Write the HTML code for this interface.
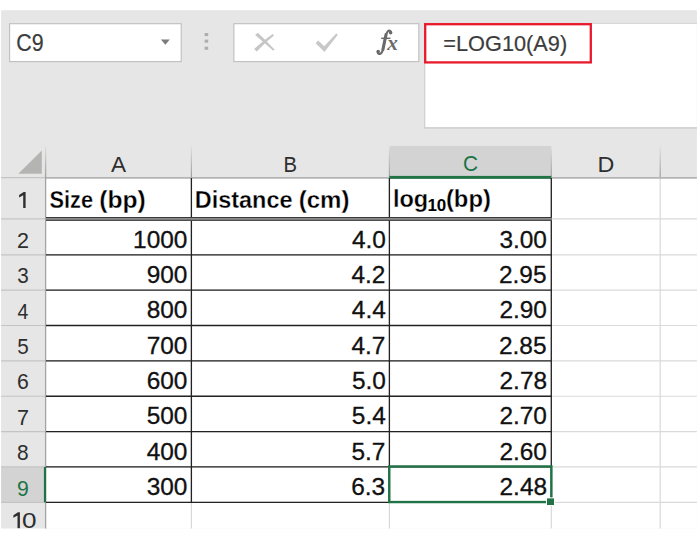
<!DOCTYPE html>
<html>
<head>
<meta charset="utf-8">
<title>Excel</title>
<style>
html,body{margin:0;padding:0;background:#fff;}
body{width:698px;height:539px;overflow:hidden;font-family:"Liberation Sans",sans-serif;}
svg{display:block;position:absolute;left:0;top:0;}
text{font-family:"Liberation Sans",sans-serif;}
.ui{fill:#3c3c3c;stroke:#3c3c3c;stroke-width:0.2px;}
.hd{fill:#2e2e2e;}
.hg{fill:#217346;}
.num{fill:#111;stroke:#111;stroke-width:0.3px;}
.b{font-weight:bold;fill:#000;stroke:#fff;stroke-width:0.3px;}
.fx{fill:#6a6a6a;}
.bs{font-weight:bold;fill:#000;}
</style>
</head>
<body>
<svg width="698" height="539" viewBox="0 0 698 539">
<rect x="1.1" y="10.2" width="695.8" height="518.5" fill="#e6e6e6"/>
<rect x="9.6" y="23.7" width="171.6" height="37.9" fill="#fff" stroke="#bebebe" stroke-width="1.1"/>
<text class="ui" x="16.22" y="51.10" textLength="27.30" lengthAdjust="spacingAndGlyphs" style="font-size:23.0px;">C9</text>
<path d="M160.9 39.6 L169.8 39.6 L165.35 44.8 Z" fill="#7c7c7c"/>
<rect x="204.6" y="33.0" width="3.6" height="3.1" fill="#aeaeae"/>
<rect x="204.6" y="39.6" width="3.6" height="3.1" fill="#aeaeae"/>
<rect x="204.6" y="46.7" width="3.6" height="3.1" fill="#aeaeae"/>
<rect x="233.9" y="23.7" width="184.9" height="37.9" fill="#fff" stroke="#bebebe" stroke-width="1.1"/>
<path d="M255.1 35.1 L257.9 32.7 Q266.3 40.7 274.5 49.6 L273.2 50.8 Q264.3 42.8 255.1 35.1 Z" fill="#c6c6c6"/>
<path d="M254.1 49.0 L256.7 51.5 Q264.8 42.8 273.9 35.5 L272.7 34.0 Q262.8 40.8 254.1 49.0 Z" fill="#c6c6c6"/>
<path d="M315.6 43.3 L318.2 40.4 L324.2 46.2 L336.2 33.4 L337.8 34.8 L324.5 51.9 Z" fill="#c8c8c8"/>
<path d="M390.9 32.9 C391.4 30.6 389.0 29.9 387.7 31.4 C386.0 33.4 385.7 36.3 385.1 39.3 L383.1 48.8 C382.4 52.0 381.2 54.1 379.4 54.0 C378.1 53.9 377.5 52.9 377.9 51.9" fill="none" stroke="#6a6a6a" stroke-width="2.1" stroke-linecap="round"/>
<path d="M386.0 34.6 L382.9 49.6" stroke="#6a6a6a" stroke-width="3.0" stroke-linecap="round" fill="none"/>
<circle cx="390.6" cy="32.8" r="1.8" fill="#6a6a6a"/>
<circle cx="378.2" cy="51.6" r="1.8" fill="#6a6a6a"/>
<path d="M381.2 38.3 L390.4 38.3" stroke="#6a6a6a" stroke-width="1.5" fill="none"/>
<text class="fx" x="387.16" y="49.90" textLength="10.56" lengthAdjust="spacingAndGlyphs" style="font-size:20.5px;font-family:'Liberation Serif',serif;font-style:italic;font-weight:bold;">x</text>
<rect x="424.1" y="22.8" width="272.8" height="105.9" fill="#cfcfcf"/>
<rect x="425.3" y="23.8" width="271.6" height="103.3" fill="#fff"/>
<rect x="425.2" y="24.2" width="165.6" height="38.2" fill="none" stroke="#e8192c" stroke-width="2.3"/>
<text class="ui" x="443.34" y="50.90" textLength="123.81" lengthAdjust="spacingAndGlyphs" style="font-size:22.8px;">=LOG10(A9)</text>
<rect x="46.0" y="178.0" width="650.9" height="350.7" fill="#fff"/>
<rect x="389.4" y="146.0" width="161.9" height="32.0" fill="#d3d3d3"/>
<rect x="1.1" y="466.96" width="44.9" height="35.36" fill="#d3d3d3"/>
<path d="M41.8 150.5 L41.8 173.8 L18.3 173.8 Z" fill="#b4b4b2"/>
<line x1="46.0" y1="218.90" x2="696.9" y2="218.90" stroke="#d9d9d9" stroke-width="1.2"/>
<line x1="46.0" y1="254.80" x2="696.9" y2="254.80" stroke="#d9d9d9" stroke-width="1.2"/>
<line x1="46.0" y1="290.16" x2="696.9" y2="290.16" stroke="#d9d9d9" stroke-width="1.2"/>
<line x1="46.0" y1="325.52" x2="696.9" y2="325.52" stroke="#d9d9d9" stroke-width="1.2"/>
<line x1="46.0" y1="360.88" x2="696.9" y2="360.88" stroke="#d9d9d9" stroke-width="1.2"/>
<line x1="46.0" y1="396.24" x2="696.9" y2="396.24" stroke="#d9d9d9" stroke-width="1.2"/>
<line x1="46.0" y1="431.60" x2="696.9" y2="431.60" stroke="#d9d9d9" stroke-width="1.2"/>
<line x1="46.0" y1="466.96" x2="696.9" y2="466.96" stroke="#d9d9d9" stroke-width="1.2"/>
<line x1="46.0" y1="502.32" x2="696.9" y2="502.32" stroke="#d9d9d9" stroke-width="1.2"/>
<line x1="191.4" y1="178.0" x2="191.4" y2="528.7" stroke="#d9d9d9" stroke-width="1.2"/>
<line x1="389.4" y1="178.0" x2="389.4" y2="528.7" stroke="#d9d9d9" stroke-width="1.2"/>
<line x1="551.3" y1="178.0" x2="551.3" y2="528.7" stroke="#d9d9d9" stroke-width="1.2"/>
<line x1="660.2" y1="178.0" x2="660.2" y2="528.7" stroke="#d9d9d9" stroke-width="1.2"/>
<line x1="1.1" y1="218.90" x2="46.0" y2="218.90" stroke="#c4c4c4" stroke-width="1.2"/>
<line x1="1.1" y1="254.80" x2="46.0" y2="254.80" stroke="#c4c4c4" stroke-width="1.2"/>
<line x1="1.1" y1="290.16" x2="46.0" y2="290.16" stroke="#c4c4c4" stroke-width="1.2"/>
<line x1="1.1" y1="325.52" x2="46.0" y2="325.52" stroke="#c4c4c4" stroke-width="1.2"/>
<line x1="1.1" y1="360.88" x2="46.0" y2="360.88" stroke="#c4c4c4" stroke-width="1.2"/>
<line x1="1.1" y1="396.24" x2="46.0" y2="396.24" stroke="#c4c4c4" stroke-width="1.2"/>
<line x1="1.1" y1="431.60" x2="46.0" y2="431.60" stroke="#c4c4c4" stroke-width="1.2"/>
<line x1="1.1" y1="466.96" x2="46.0" y2="466.96" stroke="#c4c4c4" stroke-width="1.2"/>
<line x1="1.1" y1="502.32" x2="46.0" y2="502.32" stroke="#c4c4c4" stroke-width="1.2"/>
<defs><linearGradient id="hg" gradientUnits="userSpaceOnUse" x1="0" y1="146.0" x2="0" y2="178.0"><stop offset="0" stop-color="#e0e0e0"/><stop offset="1" stop-color="#9c9c9c"/></linearGradient></defs>
<rect x="190.8" y="146.0" width="1.2" height="32.0" fill="url(#hg)"/>
<rect x="388.8" y="146.0" width="1.2" height="32.0" fill="url(#hg)"/>
<rect x="550.7" y="146.0" width="1.2" height="32.0" fill="url(#hg)"/>
<rect x="659.6" y="146.0" width="1.2" height="32.0" fill="url(#hg)"/>
<line x1="46.0" y1="177.9" x2="696.9" y2="177.9" stroke="#b4b4b4" stroke-width="1.9"/>
<line x1="1.1" y1="177.6" x2="46.0" y2="177.6" stroke="#c4c4c4" stroke-width="1.3"/>
<rect x="44.95" y="146.0" width="1.3" height="32.0" fill="url(#hg)"/>
<line x1="45.6" y1="177.0" x2="45.6" y2="528.7" stroke="#a4a4a4" stroke-width="1.3"/>
<rect x="389.4" y="175.9" width="161.9" height="2.9" fill="#217346"/>
<rect x="43.9" y="466.96" width="2.2" height="35.36" fill="#217346"/>
<line x1="46.0" y1="254.80" x2="551.3" y2="254.80" stroke="#222" stroke-width="1.3"/>
<line x1="46.0" y1="290.16" x2="551.3" y2="290.16" stroke="#222" stroke-width="1.3"/>
<line x1="46.0" y1="325.52" x2="551.3" y2="325.52" stroke="#222" stroke-width="1.3"/>
<line x1="46.0" y1="360.88" x2="551.3" y2="360.88" stroke="#222" stroke-width="1.3"/>
<line x1="46.0" y1="396.24" x2="551.3" y2="396.24" stroke="#222" stroke-width="1.3"/>
<line x1="46.0" y1="431.60" x2="551.3" y2="431.60" stroke="#222" stroke-width="1.3"/>
<line x1="46.0" y1="466.96" x2="551.3" y2="466.96" stroke="#222" stroke-width="1.3"/>
<line x1="46.0" y1="502.32" x2="551.3" y2="502.32" stroke="#222" stroke-width="1.3"/>
<line x1="191.4" y1="178.0" x2="191.4" y2="502.32" stroke="#222" stroke-width="1.3"/>
<line x1="389.4" y1="178.0" x2="389.4" y2="502.32" stroke="#222" stroke-width="1.3"/>
<line x1="551.3" y1="178.0" x2="551.3" y2="502.32" stroke="#222" stroke-width="1.3"/>
<rect x="46.0" y="217.0" width="505.9" height="3.8" fill="#8c8c8c"/>
<rect x="46.0" y="217.0" width="505.9" height="1.0" fill="#3a3a3a"/>
<rect x="46.0" y="219.8" width="505.9" height="1.0" fill="#3a3a3a"/>
<text class="hd" x="111.06" y="171.50" textLength="15.09" lengthAdjust="spacingAndGlyphs" style="font-size:22.8px;">A</text>
<text class="hd" x="283.54" y="171.50" textLength="13.53" lengthAdjust="spacingAndGlyphs" style="font-size:22.8px;">B</text>
<text class="hg" x="463.04" y="171.40" textLength="15.05" lengthAdjust="spacingAndGlyphs" style="font-size:22.8px;">C</text>
<text class="hd" x="597.59" y="171.50" textLength="16.83" lengthAdjust="spacingAndGlyphs" style="font-size:22.8px;">D</text>
<path class="hd" d="M19.10 195.00 L23.70 192.00 L25.60 192.00 L25.60 207.90 L23.20 207.90 L23.20 195.20 L19.10 197.40 Z"/>
<text class="hd" x="16.92" y="248.00" textLength="11.96" lengthAdjust="spacingAndGlyphs" style="font-size:22.8px;">2</text>
<text class="hd" x="17.21" y="283.36" textLength="11.50" lengthAdjust="spacingAndGlyphs" style="font-size:22.8px;">3</text>
<text class="hd" x="17.55" y="318.72" textLength="10.82" lengthAdjust="spacingAndGlyphs" style="font-size:22.8px;">4</text>
<text class="hd" x="17.17" y="354.08" textLength="11.50" lengthAdjust="spacingAndGlyphs" style="font-size:22.8px;">5</text>
<text class="hd" x="16.92" y="389.44" textLength="11.81" lengthAdjust="spacingAndGlyphs" style="font-size:22.8px;">6</text>
<text class="hd" x="16.89" y="424.80" textLength="11.99" lengthAdjust="spacingAndGlyphs" style="font-size:22.8px;">7</text>
<text class="hd" x="17.09" y="460.16" textLength="11.62" lengthAdjust="spacingAndGlyphs" style="font-size:22.8px;">8</text>
<text class="hg" x="17.01" y="495.52" textLength="11.80" lengthAdjust="spacingAndGlyphs" style="font-size:22.8px;">9</text>
<path class="hd" d="M13.40 515.30 L18.00 512.30 L19.90 512.30 L19.90 528.20 L17.50 528.20 L17.50 515.50 L13.40 517.70 Z"/>
<text class="hd" x="21.98" y="528.20" textLength="14.54" lengthAdjust="spacingAndGlyphs" style="font-size:22.8px;">0</text>
<text class="b" x="49.57" y="208.00" textLength="43.47" lengthAdjust="spacingAndGlyphs" style="font-size:23.2px;">Size</text>
<text class="b" x="99.27" y="208.00" textLength="46.56" lengthAdjust="spacingAndGlyphs" style="font-size:23.2px;">(bp)</text>
<text class="b" x="194.83" y="208.00" textLength="97.67" lengthAdjust="spacingAndGlyphs" style="font-size:23.2px;">Distance</text>
<text class="b" x="298.70" y="208.00" textLength="50.80" lengthAdjust="spacingAndGlyphs" style="font-size:23.2px;">(cm)</text>
<text class="b" x="392.96" y="206.80" textLength="35.21" lengthAdjust="spacingAndGlyphs" style="font-size:23.2px;">log</text>
<text class="bs" x="427.43" y="211.30" textLength="18.86" lengthAdjust="spacingAndGlyphs" style="font-size:16.2px;">10</text>
<text class="b" x="445.91" y="206.80" textLength="44.97" lengthAdjust="spacingAndGlyphs" style="font-size:23.2px;">(bp)</text>
<text class="num" x="133.12" y="247.60" textLength="54.34" lengthAdjust="spacingAndGlyphs" style="font-size:23.6px;">1000</text>
<text class="num" x="351.90" y="247.60" textLength="33.96" lengthAdjust="spacingAndGlyphs" style="font-size:23.6px;">4.0</text>
<text class="num" x="499.41" y="247.60" textLength="47.54" lengthAdjust="spacingAndGlyphs" style="font-size:23.6px;">3.00</text>
<text class="num" x="146.70" y="282.96" textLength="40.75" lengthAdjust="spacingAndGlyphs" style="font-size:23.6px;">900</text>
<text class="num" x="351.47" y="282.96" textLength="33.96" lengthAdjust="spacingAndGlyphs" style="font-size:23.6px;">4.2</text>
<text class="num" x="498.99" y="282.96" textLength="47.54" lengthAdjust="spacingAndGlyphs" style="font-size:23.6px;">2.95</text>
<text class="num" x="146.70" y="318.32" textLength="40.75" lengthAdjust="spacingAndGlyphs" style="font-size:23.6px;">800</text>
<text class="num" x="351.86" y="318.32" textLength="33.96" lengthAdjust="spacingAndGlyphs" style="font-size:23.6px;">4.4</text>
<text class="num" x="499.41" y="318.32" textLength="47.54" lengthAdjust="spacingAndGlyphs" style="font-size:23.6px;">2.90</text>
<text class="num" x="146.70" y="353.68" textLength="40.75" lengthAdjust="spacingAndGlyphs" style="font-size:23.6px;">700</text>
<text class="num" x="351.47" y="353.68" textLength="33.96" lengthAdjust="spacingAndGlyphs" style="font-size:23.6px;">4.7</text>
<text class="num" x="498.99" y="353.68" textLength="47.54" lengthAdjust="spacingAndGlyphs" style="font-size:23.6px;">2.85</text>
<text class="num" x="146.70" y="389.04" textLength="40.75" lengthAdjust="spacingAndGlyphs" style="font-size:23.6px;">600</text>
<text class="num" x="351.90" y="389.04" textLength="33.96" lengthAdjust="spacingAndGlyphs" style="font-size:23.6px;">5.0</text>
<text class="num" x="499.52" y="389.04" textLength="47.54" lengthAdjust="spacingAndGlyphs" style="font-size:23.6px;">2.78</text>
<text class="num" x="146.70" y="424.40" textLength="40.75" lengthAdjust="spacingAndGlyphs" style="font-size:23.6px;">500</text>
<text class="num" x="351.86" y="424.40" textLength="33.96" lengthAdjust="spacingAndGlyphs" style="font-size:23.6px;">5.4</text>
<text class="num" x="499.41" y="424.40" textLength="47.54" lengthAdjust="spacingAndGlyphs" style="font-size:23.6px;">2.70</text>
<text class="num" x="146.70" y="459.76" textLength="40.75" lengthAdjust="spacingAndGlyphs" style="font-size:23.6px;">400</text>
<text class="num" x="351.47" y="459.76" textLength="33.96" lengthAdjust="spacingAndGlyphs" style="font-size:23.6px;">5.7</text>
<text class="num" x="499.41" y="459.76" textLength="47.54" lengthAdjust="spacingAndGlyphs" style="font-size:23.6px;">2.60</text>
<text class="num" x="146.70" y="495.12" textLength="40.75" lengthAdjust="spacingAndGlyphs" style="font-size:23.6px;">300</text>
<text class="num" x="351.22" y="495.12" textLength="33.96" lengthAdjust="spacingAndGlyphs" style="font-size:23.6px;">6.3</text>
<text class="num" x="499.52" y="495.12" textLength="47.54" lengthAdjust="spacingAndGlyphs" style="font-size:23.6px;">2.48</text>
<rect x="389.25" y="466.45" width="162.15" height="35.6" fill="none" stroke="#217346" stroke-width="2.4"/>
<rect x="546.0" y="497.4" width="9.0" height="8.6" fill="#fff"/>
<rect x="547.0" y="498.4" width="7.0" height="6.6" fill="#217346"/>
<rect x="0" y="528.7" width="698" height="10.3" fill="#fff"/>
</svg>
</body>
</html>
